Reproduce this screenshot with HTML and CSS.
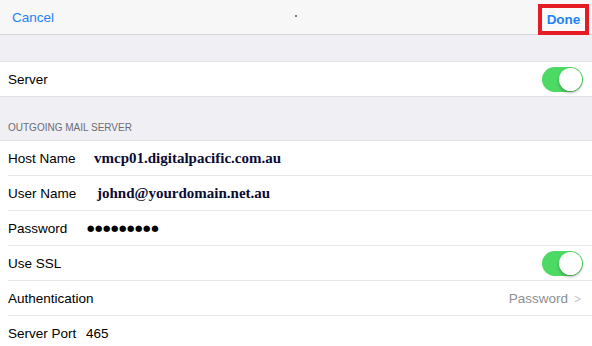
FILE: index.html
```html
<!DOCTYPE html>
<html lang="en">
<head>
  <meta charset="UTF-8">
  <title>Outgoing Mail Server</title>
  <meta name="viewport" content="width=device-width, initial-scale=1.0">
  <link rel="stylesheet" href="styles.css">
</head>
<body>

<!-- BARRA DE NAVEGACAO -->
<div class="navbar">
  <span class="nav-btn">Cancel</span>
  <span class="nav-dot"></span>
  <span class="done-box"><span class="nav-btn done">Done</span></span>
</div>

<div class="spacer"></div>

<div class="group">
  <div class="row">
    <span class="label">Server</span>
    <span class="toggle"><span class="knob"></span></span>
  </div>
</div>

<div class="section-header">OUTGOING MAIL SERVER</div>

<div class="group">
  <div class="row field">
    <span class="label">Host Name</span>
    <span class="value typed host">vmcp01.digitalpacific.com.au</span>
  </div>
  <div class="row field">
    <span class="label">User Name</span>
    <span class="value typed user">johnd@yourdomain.net.au</span>
  </div>
  <div class="row field">
    <span class="label">Password</span>
    <span class="value dots">●●●●●●●●●</span>
  </div>
  <div class="row">
    <span class="label">Use SSL</span>
    <span class="toggle"><span class="knob"></span></span>
  </div>
  <div class="row">
    <span class="label">Authentication</span>
    <span class="detail">Password <span class="chevron">&gt;</span></span>
  </div>
  <div class="row field">
    <span class="label">Server Port</span>
    <span class="value">465</span>
  </div>
</div>

</body>
</html>
```

FILE: styles.css
```css
body {
  font-family: "Liberation Sans", Arial, sans-serif;
  font-size: 13.5px;
  color: #000;
  background-color: #efeff4;
  margin: 0;
  padding: 0;
}

.navbar {
  height: 34px;
  background-color: #f7f7f7;
  border-bottom: 1px solid #d6d6d9;
  display: flex;
  align-items: center;
  justify-content: space-between;
  padding: 0 3px 0 12px;
}

.nav-btn {
  color: #1f82f7;
}

.nav-dot {
  width: 2px;
  height: 2px;
  background-color: #777;
  margin-bottom: 2px;
}

.done-box {
  border: 4px solid #e61c24;
  background-color: #fbfbfb;
  width: 43px;
  height: 23px;
  display: flex;
  align-items: center;
  justify-content: center;
  margin-top: 4px;
}

.done {
  font-weight: bold;
}

.spacer {
  height: 26px;
}

.group {
  background-color: #fff;
  border-top: 1px solid #e2e2e5;
  border-bottom: 1px solid #e2e2e5;
}

.row {
  height: 34px;
  display: flex;
  align-items: center;
  margin-left: 8px;
  padding-right: 9px;
  border-bottom: 1px solid #e6e6e8;
}

.row:last-child {
  border-bottom: none;
}

.label {
  flex: 1;
}

.field .label {
  flex: 0 0 78px;
}

.value {
  flex: 1;
}

.typed {
  font-family: "Liberation Serif", "Times New Roman", serif;
  font-weight: bold;
  font-size: 15px;
  color: #0b0b33;
}

.host {
  padding-left: 8px;
}

.user {
  padding-left: 11px;
}

.dots {
  font-family: "DejaVu Sans", sans-serif;
  font-size: 8.5px;
  letter-spacing: 0.6px;
  padding-left: 1px;
}

.toggle {
  width: 41px;
  height: 25px;
  border-radius: 13px;
  background-color: #4cd964;
  display: flex;
  align-items: center;
  justify-content: flex-end;
  padding: 0 1px;
  box-sizing: border-box;
}

.knob {
  width: 23px;
  height: 23px;
  border-radius: 50%;
  background-color: #fff;
  box-shadow: 0 2px 3px rgba(0, 0, 0, 0.25);
}

.detail {
  color: #8e8e93;
  display: flex;
  align-items: center;
  gap: 4px;
}

.chevron {
  color: #c4c4c9;
  font-family: "DejaVu Sans", sans-serif;
  font-size: 13px;
  transform: scaleX(0.7);
}

.section-header {
  height: 43px;
  box-sizing: border-box;
  padding: 25px 8px 0;
  font-size: 10px;
  color: #6d6d72;
}
```
